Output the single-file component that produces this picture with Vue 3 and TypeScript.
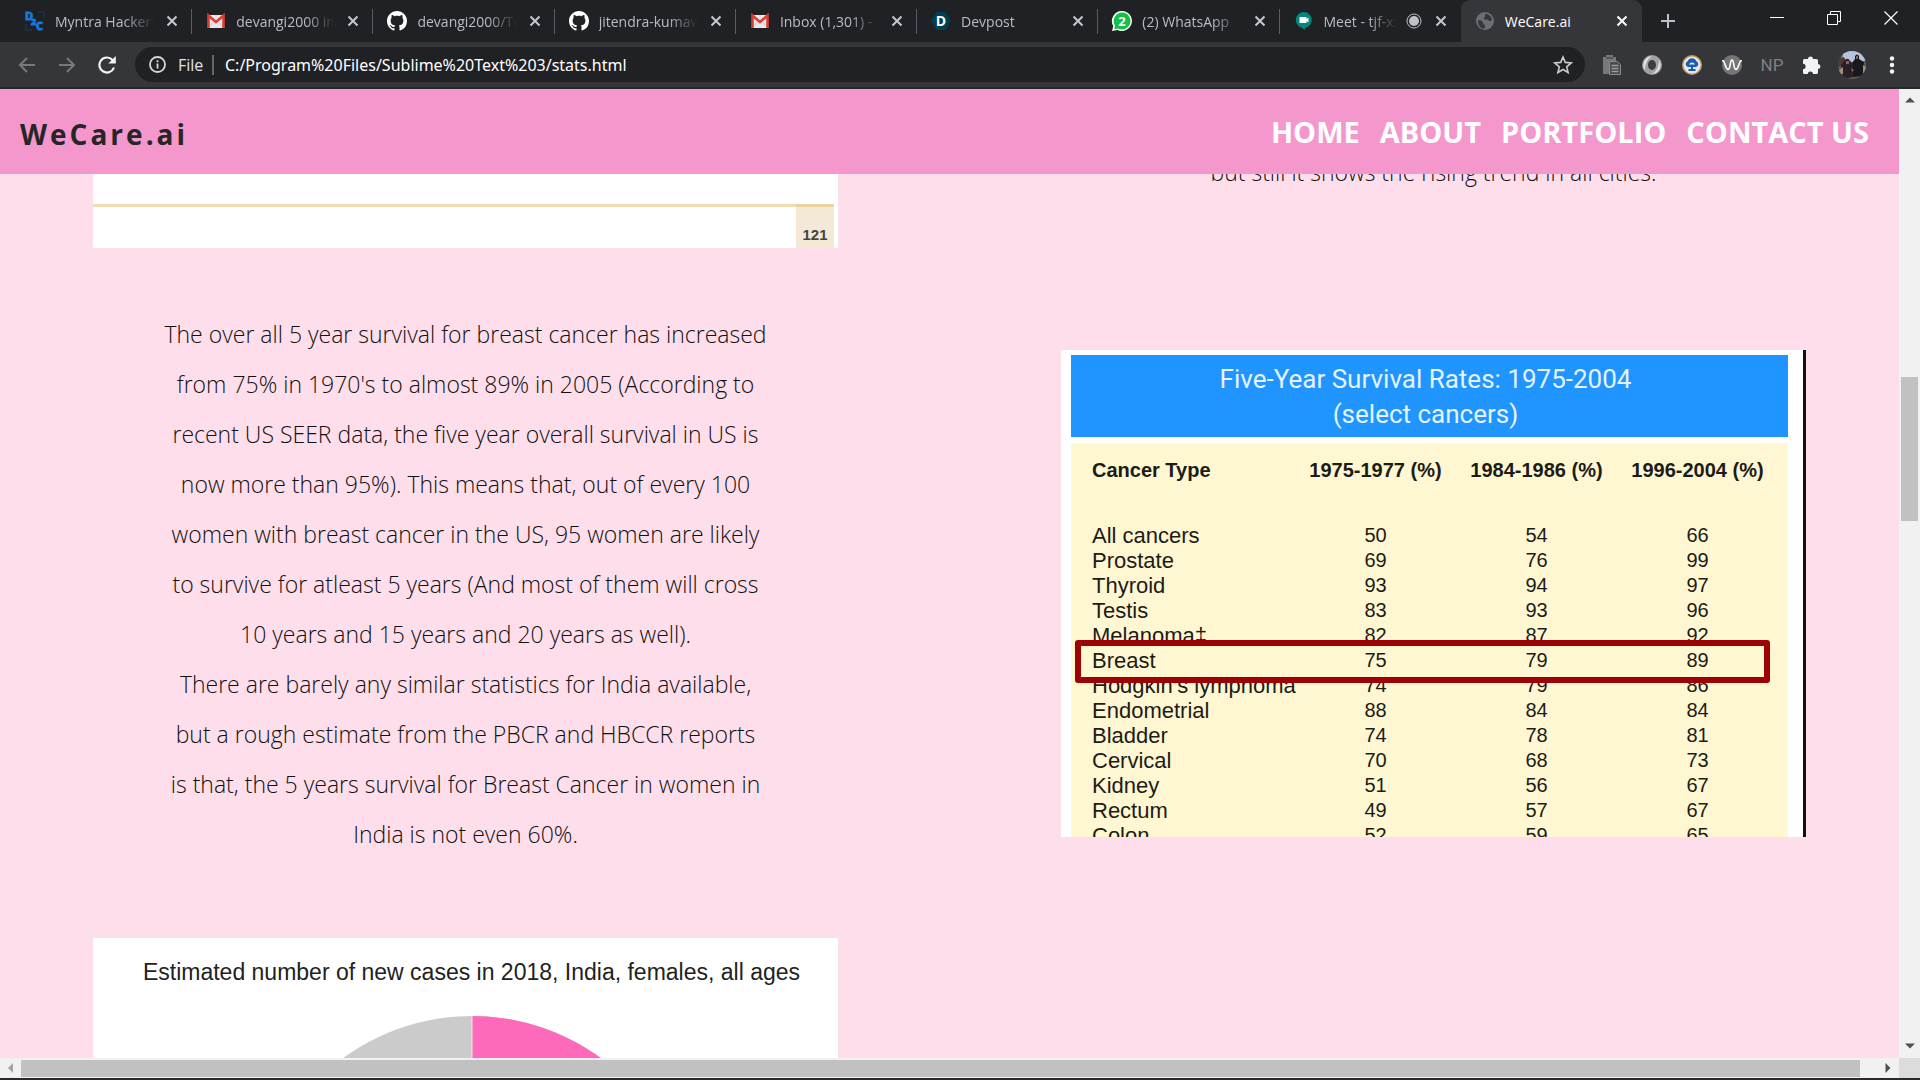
<script setup lang="ts">
interface Tab {
  icon: string
  title: string
  active?: boolean
  recording?: boolean
}

interface Rate {
  name: string
  values: number[]
}

const tabs: Tab[] = [
  { icon: 'd2c', title: 'Myntra HackerRamp' },
  { icon: 'gmail', title: 'devangi2000 inbox' },
  { icon: 'github', title: 'devangi2000/Text' },
  { icon: 'github', title: 'jitendra-kumawat' },
  { icon: 'gmail', title: 'Inbox (1,301) - s' },
  { icon: 'devpost', title: 'Devpost' },
  { icon: 'whatsapp', title: '(2) WhatsApp' },
  { icon: 'meet', title: 'Meet - tjf-xx', recording: true },
  { icon: 'globe', title: 'WeCare.ai', active: true },
]

const address = 'C:/Program%20Files/Sublime%20Text%203/stats.html'

const links = ['HOME', 'ABOUT', 'PORTFOLIO', 'CONTACT US']

const survivalLines = [
  'The over all 5 year survival for breast cancer has increased',
  "from 75% in 1970's to almost 89% in 2005 (According to",
  'recent US SEER data, the five year overall survival in US is',
  'now more than 95%). This means that, out of every 100',
  'women with breast cancer in the US, 95 women are likely',
  'to survive for atleast 5 years (And most of them will cross',
  '10 years and 15 years and 20 years as well).',
  'There are barely any similar statistics for India available,',
  'but a rough estimate from the PBCR and HBCCR reports',
  'is that, the 5 years survival for Breast Cancer in women in',
  'India is not even 60%.',
]

const periods = ['1975-1977 (%)', '1984-1986 (%)', '1996-2004 (%)']

const rates: Rate[] = [
  { name: 'All cancers', values: [50, 54, 66] },
  { name: 'Prostate', values: [69, 76, 99] },
  { name: 'Thyroid', values: [93, 94, 97] },
  { name: 'Testis', values: [83, 93, 96] },
  { name: 'Melanoma‡', values: [82, 87, 92] },
  { name: 'Breast', values: [75, 79, 89] },
  { name: 'Hodgkin’s lymphoma', values: [74, 79, 86] },
  { name: 'Endometrial', values: [88, 84, 84] },
  { name: 'Bladder', values: [74, 78, 81] },
  { name: 'Cervical', values: [70, 68, 73] },
  { name: 'Kidney', values: [51, 56, 67] },
  { name: 'Rectum', values: [49, 57, 67] },
  { name: 'Colon', values: [52, 59, 65] },
]
</script>

<template>
  <div class="browser">
    <header class="chrome">
      <div class="strip">
        <div class="tabs">
          <div v-for="(tab, i) in tabs" :key="i" class="tab" :class="{ active: tab.active, plain: i === 7 }">
            <svg class="favicon" viewBox="0 0 20 20" aria-hidden="true">
              <g v-if="tab.icon === 'd2c'">
                <path d="M13 1h6v6M1 13v6h6" fill="none" stroke="#1d3a5c" />
                <text x="0" y="9" class="d2c-letter">D</text>
                <text x="6" y="14" class="d2c-letter small">2</text>
                <text x="11" y="19" class="d2c-letter">C</text>
              </g>
              <g v-else-if="tab.icon === 'gmail'">
                <path d="M2 4h16v13H2z" fill="#e8e8e8" />
                <path d="M2 16.500l6-6M18 16.500l-6-6" stroke="#c9c9c9" />
                <path d="M2.500 17V4.500L10 11l7.500-6.500V17" fill="none" stroke="#d93f35" stroke-width="2.600" />
              </g>
              <path
                v-else-if="tab.icon === 'github'"
                transform="scale(1.250)"
                fill="#fff"
                d="M8 0C3.580 0 0 3.580 0 8c0 3.540 2.290 6.530 5.470 7.590.4.070.55-.17.55-.38 0-.19-.01-.82-.01-1.490-2.010.37-2.530-.49-2.690-.94-.09-.23-.48-.94-.82-1.130-.28-.15-.68-.52-.01-.53.63-.01 1.080.58 1.230.82.72 1.210 1.870.87 2.330.66.070-.52.280-.87.510-1.070-1.780-.2-3.640-.89-3.640-3.950 0-.87.310-1.590.820-2.150-.08-.2-.36-1.020.08-2.120 0 0 .67-.21 2.200.82.640-.18 1.320-.27 2-.27s1.360.09 2 .27c1.530-1.040 2.200-.82 2.200-.82.44 1.100.16 1.920.08 2.120.51.56.82 1.270.82 2.150 0 3.070-1.870 3.750-3.650 3.950.29.25.54.73.54 1.480 0 1.070-.01 1.930-.01 2.200 0 .21.15.46.55.38A8.010 8.010 0 0 0 16 8c0-4.420-3.580-8-8-8z"
              />
              <g v-else-if="tab.icon === 'devpost'">
                <path d="M5.500 1h9L20 10l-5.500 9h-9L0 10z" fill="#003e54" />
                <text x="10" y="15" class="mark" font-size="14">D</text>
              </g>
              <g v-else-if="tab.icon === 'whatsapp'">
                <path d="M10 0a10 10 0 1 1-4.600 18.900L0 20l1.300-5A10 10 0 0 1 10 0z" fill="#fff" />
                <path d="M10 1.500a8.500 8.500 0 1 1-4 16l-3.800.8.900-3.600A8.500 8.500 0 0 1 10 1.500z" fill="#15c144" />
                <text x="10" y="14.500" class="mark" font-size="13">2</text>
              </g>
              <g v-else-if="tab.icon === 'meet'">
                <path d="M10 1a8 8 0 0 1 1.500 15.800L10.500 19 8 16.800A8 8 0 0 1 10 1z" fill="#00897b" />
                <path d="M5.500 6h7v2l2-1.500v5l-2-1.500v2h-7z" fill="#fff" />
              </g>
              <g v-else>
                <circle cx="10" cy="10" r="9" fill="#6b6e73" />
                <path d="M3 9c3 0 5 1 5 3s2 1 2 3-1 2-1 3C5 17 3 14 3 9zM10 3c3-.5 6 2 7 5-1 3-3 2-4 1s-3 0-4-1 2-2 1-5z" fill="#35363a" />
              </g>
            </svg>
            <span class="tab-title">{{ tab.title }}</span>
            <svg v-if="tab.recording" class="recording" viewBox="0 0 16 16" aria-hidden="true">
              <circle cx="8" cy="8" r="7" fill="none" stroke="#bdc1c6" />
              <circle cx="8" cy="8" r="5" fill="#bdc1c6" />
            </svg>
            <button class="tab-close" type="button" aria-label="Close tab">
              <svg viewBox="0 0 20 20"><path d="M5.500 5.500l9 9M14.500 5.500l-9 9" stroke="currentColor" stroke-width="2" /></svg>
            </button>
          </div>
        </div>
        <button class="new-tab" type="button" aria-label="New tab">
          <svg width="16" height="16" viewBox="0 0 16 16"><path d="M8 1v14M1 8h14" stroke="#bdc1c6" stroke-width="2" /></svg>
        </button>
        <div class="window-controls">
          <button type="button" aria-label="Minimize">
            <svg width="14" height="14" viewBox="0 0 14 14"><path d="M0 6.500h14" stroke="#fff" /></svg>
          </button>
          <button type="button" aria-label="Restore">
            <svg width="14" height="14" viewBox="0 0 14 14"><path d="M.5 3.500h10v10H.500zM3.500 3V.500h10v10H11" fill="none" stroke="#fff" /></svg>
          </button>
          <button type="button" aria-label="Close">
            <svg width="14" height="14" viewBox="0 0 14 14"><path d="M.5.5l13 13M13.500.5l-13 13" stroke="#fff" stroke-width="1.200" /></svg>
          </button>
        </div>
      </div>

      <div class="toolbar">
        <div class="history">
          <button type="button" aria-label="Back">
            <svg width="18" height="18" viewBox="0 0 18 18"><path d="M17 9H2M9 2L2 9l7 7" fill="none" stroke="#77797d" stroke-width="2" /></svg>
          </button>
          <button type="button" aria-label="Forward">
            <svg width="18" height="18" viewBox="0 0 18 18"><path d="M1 9h15M9 2l7 7-7 7" fill="none" stroke="#77797d" stroke-width="2" /></svg>
          </button>
          <button type="button" aria-label="Reload">
            <svg width="18" height="18" viewBox="0 0 18 18">
              <path d="M16 11.500A7.500 7.500 0 1 1 14.500 4" fill="none" stroke="#f1f3f4" stroke-width="2.200" />
              <path d="M17.800 0v7.500h-7.500z" fill="#f1f3f4" />
            </svg>
          </button>
        </div>
        <div class="omnibox">
          <svg class="info" viewBox="0 0 17 17" aria-hidden="true">
            <circle cx="8.500" cy="8.500" r="7.500" fill="none" stroke="#d5d7da" stroke-width="1.800" />
            <path d="M8.500 7.500v5M8.500 4.200v2" stroke="#d5d7da" stroke-width="1.800" />
          </svg>
          <label class="scheme" for="address">File</label>
          <input id="address" class="address" type="text" :value="address" spellcheck="false" />
          <button class="bookmark" type="button" aria-label="Bookmark this page">
            <svg width="20" height="20" viewBox="0 0 20 20">
              <path d="M10 2l2.300 5.400 5.900.5-4.500 3.900 1.400 5.700-5.100-3-5.100 3 1.400-5.700L1.800 7.900l5.900-.5z" fill="none" stroke="#c8cacd" stroke-width="1.600" />
            </svg>
          </button>
        </div>
        <div class="extensions">
          <button type="button" aria-label="Clipboard">
            <svg width="20" height="20" viewBox="0 0 20 20">
              <path d="M1 2h3V0h7v2h3v4H7v13H1z" fill="#77787a" />
              <path d="M4 3h7" stroke="#35363a" />
              <path d="M7.500 6.500h8l3 3v10h-11z" fill="#4a4b4e" stroke="#8a8b8d" />
              <path d="M9.500 10.500h7M9.500 13.500h7M9.500 16.500h7" stroke="#9a9b9d" stroke-width="1.300" />
            </svg>
          </button>
          <button type="button" aria-label="Ring">
            <svg width="20" height="20" viewBox="0 0 20 20">
              <circle cx="10" cy="10" r="10" fill="#a2a2a2" />
              <path d="M3 15A9 9 0 0 1 10 1c-5 3-7 8-7 14z" fill="#e6e6e6" />
              <path d="M17 5a9 9 0 0 1-7 14c5-3 7-8 7-14z" fill="#dedede" />
              <ellipse cx="10" cy="10" rx="4" ry="5" fill="#3c3d40" />
            </svg>
          </button>
          <button type="button" aria-label="Cloud">
            <svg width="20" height="20" viewBox="0 0 20 20">
              <circle cx="10" cy="10" r="9.300" fill="#dfe9f5" stroke="#c9994c" stroke-width="1.400" />
              <path d="M6 12a3 3 0 0 1-.4-5.700 4.700 4.700 0 0 1 8.800 0A3 3 0 0 1 14 12z" fill="#1c5cab" />
              <path d="M7 9.500a3.200 3.200 0 0 1 6 0z" fill="#dfe9f5" />
              <path d="M10 10v5M6.500 15h7" stroke="#1c5cab" stroke-width="2" />
            </svg>
          </button>
          <button type="button" aria-label="Wave">
            <svg width="20" height="20" viewBox="0 0 20 20">
              <circle cx="10" cy="10" r="10" fill="#757575" />
              <path d="M0 6C3 4 3 14.500 6 14.500S7.500 5 10 5s1 9.500 4 9.500S17 4 20 6" fill="none" stroke="#fff" stroke-width="1.600" />
            </svg>
          </button>
          <button class="np" type="button">NP</button>
          <button type="button" aria-label="Extensions">
            <svg width="20" height="20" viewBox="0 0 20 20">
              <path d="M1 5.500A1.500 1.500 0 0 1 2.500 4H6a2.500 2.500 0 0 1 5 0h3.500A1.500 1.500 0 0 1 16 5.500V9a2.500 2.500 0 0 1 0 5v3.500a1.500 1.500 0 0 1-1.500 1.500H11a2.600 2.600 0 0 0-5.200 0H2.500A1.500 1.500 0 0 1 1 17.500V14a2.600 2.600 0 0 0 0-5.200z" fill="#f1f3f4" />
            </svg>
          </button>
          <button type="button" aria-label="Profile">
            <svg width="28" height="28" viewBox="0 0 28 28">
              <defs><clipPath id="avatar"><circle cx="14" cy="14" r="14" /></clipPath></defs>
              <g clip-path="url(#avatar)">
                <path d="M0 0h28v28H0z" fill="#62594f" />
                <path d="M5 0h17l6 9-8 4-9-3-7 2z" fill="#b7c4dc" />
                <path d="M0 8l6-2 3 6-9 4z" fill="#473d35" />
                <path d="M17 5q2-3 4 0v3l5 3-1 14-10 1-1-14 3-4z" fill="#17191f" />
                <path d="M7 9q3-3 5 1l2 3 1 13-10 2-2-14z" fill="#2b1f27" />
                <path d="M1 19l4-3v7H1zM25 14l3 2v6h-3z" fill="#a08e79" />
                <path d="M8 10h3v3H8zM18 5h2v3h-2zM13 17l3 2-2 2z" fill="#8b6255" />
              </g>
            </svg>
          </button>
          <button type="button" aria-label="Menu">
            <svg width="6" height="18" viewBox="0 0 6 18"><g fill="#f1f3f4"><circle cx="3" cy="2.500" r="2.200" /><circle cx="3" cy="9" r="2.200" /><circle cx="3" cy="15.500" r="2.200" /></g></svg>
          </button>
        </div>
      </div>
    </header>

    <div class="viewport">
      <div class="page">
        <nav class="navbar">
          <h1 class="brand">WeCare.ai</h1>
          <ul class="links">
            <li v-for="link in links" :key="link"><a href="#">{{ link }}</a></li>
          </ul>
        </nav>

        <main class="content">
          <section class="row trend">
            <div class="report"><span class="page-number">121</span></div>
            <p class="copy">but still it shows the rising trend in all cities.</p>
          </section>

          <section class="row survival">
            <p class="copy">
              <template v-for="(line, i) in survivalLines" :key="i">{{ line }}<br v-if="i < survivalLines.length - 1" /></template>
            </p>
            <figure class="chart">
              <figcaption>Five-Year Survival Rates: 1975-2004<br />(select cancers)</figcaption>
              <div class="sheet">
                <table>
                  <thead>
                    <tr>
                      <th scope="col" class="name">Cancer Type</th>
                      <th v-for="period in periods" :key="period" scope="col" class="value">{{ period }}</th>
                    </tr>
                  </thead>
                  <tbody>
                    <tr v-for="rate in rates" :key="rate.name" :class="{ marked: rate.name === 'Breast' }">
                      <td class="name">{{ rate.name }}</td>
                      <td v-for="(value, i) in rate.values" :key="i" class="value">{{ value }}</td>
                    </tr>
                  </tbody>
                </table>
              </div>
            </figure>
          </section>

          <section class="row">
            <figure class="cases">
              <figcaption>Estimated number of new cases in 2018, India, females, all ages</figcaption>
              <svg class="pie" viewBox="0 0 438 438" aria-hidden="true">
                <circle cx="219" cy="219" r="219" fill="#cbcbcb" />
                <path d="M219 0a219 219 0 0 1 0 438z" fill="#ff69b9" />
                <path d="M219 0v219" stroke="#f4e4ec" />
              </svg>
            </figure>
          </section>
        </main>
      </div>

      <div class="scroll vertical">
        <svg width="10" height="6" viewBox="0 0 10 6"><path d="M0 5.500L5 .5l5 5z" fill="#505050" /></svg>
        <div class="track"><div class="thumb"></div></div>
        <svg width="10" height="6" viewBox="0 0 10 6"><path d="M0 .5h10l-5 5z" fill="#505050" /></svg>
      </div>
    </div>

    <div class="bottom">
      <div class="scroll horizontal">
        <svg width="6" height="10" viewBox="0 0 6 10"><path d="M5 0v10L0 5z" fill="#a3a3a3" /></svg>
        <div class="thumb"></div>
        <svg width="6" height="10" viewBox="0 0 6 10"><path d="M.5 0v10l5-5z" fill="#505050" /></svg>
      </div>
      <div class="corner"></div>
    </div>
  </div>
</template>

<style>
body {
  margin: 0;
  overflow: hidden;
}
</style>

<style scoped>
* {
  box-sizing: border-box;
}

.browser {
  display: flex;
  flex-direction: column;
  height: 100vh;
  border-bottom: 2px solid #2b292b;
  font-family: "Open Sans", "Noto Sans", sans-serif;
}

button {
  display: flex;
  align-items: center;
  justify-content: center;
  padding: 0;
  border: 0;
  background: none;
  font: inherit;
}

/* Tab strip */
.strip {
  display: flex;
  height: 42px;
  padding: 0 1px 0 11px;
  background: #202124;
}

.tabs {
  display: flex;
  flex: 1;
  min-width: 0;
}

.tab {
  position: relative;
  display: flex;
  flex: 1 1 0;
  align-items: center;
  min-width: 0;
  padding: 0 10px 0 14px;
  color: #b9bdc2;
  font-size: 14px;
}

.tab::after {
  content: "";
  position: absolute;
  top: 9px;
  right: 0;
  width: 1px;
  height: 25px;
  background: #5a5c61;
}

.tab.plain::after,
.tab.active::after {
  display: none;
}

.tab.active {
  border-radius: 9px 9px 0 0;
  background: #35363a;
  color: #fff;
}

.favicon {
  flex: none;
  width: 20px;
  height: 20px;
  margin-right: 10px;
  overflow: visible;
}

.d2c-letter {
  fill: #1579de;
  stroke: #1579de;
  font-family: "Open Sans", sans-serif;
  font-size: 11px;
  font-weight: bold;
}

.d2c-letter.small {
  font-size: 9px;
}

.mark {
  fill: #fff;
  font-family: "Open Sans", sans-serif;
  font-weight: bold;
  text-anchor: middle;
}

.tab-title {
  flex: 1;
  min-width: 0;
  margin-right: 6px;
  overflow: hidden;
  white-space: nowrap;
  mask-image: linear-gradient(to right, #000 calc(100% - 32px), transparent calc(100% - 2px));
}

.tab.active .tab-title {
  mask-image: none;
}

.recording {
  flex: none;
  width: 16px;
  height: 16px;
  margin-right: 9px;
}

.tab-close {
  flex: none;
  width: 20px;
  height: 20px;
  color: #c5c8cc;
}

.tab-close svg {
  width: 20px;
  height: 20px;
}

.active .tab-close {
  color: #fff;
}

.new-tab {
  width: 52px;
}

.window-controls {
  display: flex;
  height: 36px;
  margin-left: 54px;
}

.window-controls button {
  width: 57px;
}

/* Toolbar */
.toolbar {
  display: flex;
  align-items: center;
  height: 47px;
  padding: 0 14px 0 7px;
  border-bottom: 2px solid #28292c;
  background: #35363a;
}

.history {
  display: flex;
  margin-right: 8px;
}

.history button {
  width: 40px;
  height: 34px;
}

.omnibox {
  display: flex;
  flex: 1;
  align-items: center;
  height: 35px;
  padding: 0 12px 0 14px;
  border-radius: 18px;
  background: #202124;
  font-size: 16px;
}

.info {
  width: 17px;
  height: 17px;
  margin-right: 12px;
}

.scheme {
  width: 36px;
  border-right: 2px solid #65676b;
  color: #e2e4e7;
  line-height: 20px;
}

.address {
  flex: 1;
  min-width: 0;
  padding: 0 0 0 11px;
  border: 0;
  outline: 0;
  background: none;
  color: #fff;
  font-family: "Noto Sans", "Open Sans", sans-serif;
  font-size: 16px;
}

.extensions {
  display: flex;
  gap: 12px;
  margin-left: 13px;
}

.extensions button {
  width: 28px;
  height: 28px;
}

.extensions .np {
  color: #808184;
  font-family: Roboto, sans-serif;
  font-size: 17px;
}

/* Web page */
.viewport {
  display: flex;
  flex: 1;
  min-height: 0;
}

.page {
  flex: 1;
  min-width: 0;
  overflow: hidden;
  background: #fedeea;
}

.navbar {
  display: flex;
  align-items: center;
  justify-content: space-between;
  height: 85px;
  padding: 0 30px 0 20px;
  background: #f497cd;
}

.brand {
  margin: 4px 0 0;
  color: #262626;
  font-size: 28px;
  letter-spacing: 3px;
}

.links {
  display: flex;
  gap: 20px;
  margin: 0;
  padding: 0;
  list-style: none;
}

.links a {
  color: #fff;
  font-size: 29px;
  font-weight: bold;
  text-decoration: none;
}

.content {
  overflow: hidden;
}

.row {
  display: grid;
  grid-template-columns: 1fr 1fr;
  column-gap: 223px;
  padding: 0 93px;
}

.copy {
  margin: 0;
  color: #111;
  font-size: 23px;
  font-weight: 300;
  line-height: 50px;
  text-align: center;
  white-space: nowrap;
}

.trend {
  grid-template-rows: 74px;
  align-items: end;
}

.trend .copy {
  margin-bottom: 51px;
}

.report {
  display: flex;
  justify-content: flex-end;
  height: 74px;
  padding: 30px 4px 0 0;
  background: linear-gradient(#f2dcb4, #f2dcb4) 0 30px / calc(100% - 4px) 3px no-repeat #fff;
}

.page-number {
  width: 38px;
  padding-top: 16px;
  border-top: 3px solid #ecd29f;
  background: #f4e8d6;
  color: #444;
  font: bold 15px/24px "Liberation Sans", Arial, sans-serif;
  text-align: center;
}

.survival {
  align-items: center;
  padding-block: 61px;
}

.survival .copy {
  margin-bottom: 18px;
}

.chart {
  height: 487px;
  margin: 0;
  padding: 5px 15px 0 10px;
  overflow: hidden;
  border-right: 3px solid #111;
  background: #fff;
  color: #1c1c16;
  font-family: "Liberation Sans", Arial, sans-serif;
}

.chart figcaption {
  height: 82px;
  margin-bottom: 6px;
  padding: 7px 8px 0 0;
  background: #2094ff;
  color: #e4f3ff;
  font-family: Roboto, sans-serif;
  font-size: 26px;
  line-height: 35px;
  text-align: center;
}

.sheet {
  padding-right: 10px;
  background: #fff6d2;
}

table {
  width: 100%;
  border-collapse: collapse;
  table-layout: fixed;
  line-height: 25px;
  white-space: nowrap;
}

th,
td {
  padding: 0;
  font-size: 20px;
}

th {
  padding: 15px 0 40px;
}

.name {
  padding-left: 21px;
  text-align: left;
}

td.name {
  font-size: 22px;
}

.value {
  width: 161px;
  text-align: center;
}

.marked {
  position: relative;
}

.marked .name::after {
  content: "";
  position: absolute;
  inset: -8px 8px -10px 4px;
  border: 6px solid #9c0206;
  border-radius: 3px;
}

.cases {
  margin: 0;
  padding-left: 12px;
  overflow: hidden;
  background: #fff;
}

.cases figcaption {
  padding: 20px 0 30px;
  color: #222;
  font: 23px/28px "Liberation Sans", Arial, sans-serif;
  text-align: center;
}

.pie {
  display: block;
  width: 438px;
  margin: 0 auto;
}

/* Scroll bars */
.scroll {
  display: flex;
  align-items: center;
  background: #f1f1f1;
}

.vertical {
  flex-direction: column;
  width: 21px;
  padding: 8px 0 9px;
}

.track {
  flex: 1;
  width: 17px;
}

.vertical .thumb {
  height: 144px;
  margin-top: 274px;
  background: #c1c1c1;
}

.bottom {
  display: flex;
  height: 20px;
}

.horizontal {
  flex: 1;
  padding: 0 8px;
}

.horizontal .thumb {
  flex: 1;
  height: 17px;
  margin: 0 25px 0 7px;
  background: #c1c1c1;
}

.corner {
  width: 21px;
  background: #dcdcdc;
}
</style>
